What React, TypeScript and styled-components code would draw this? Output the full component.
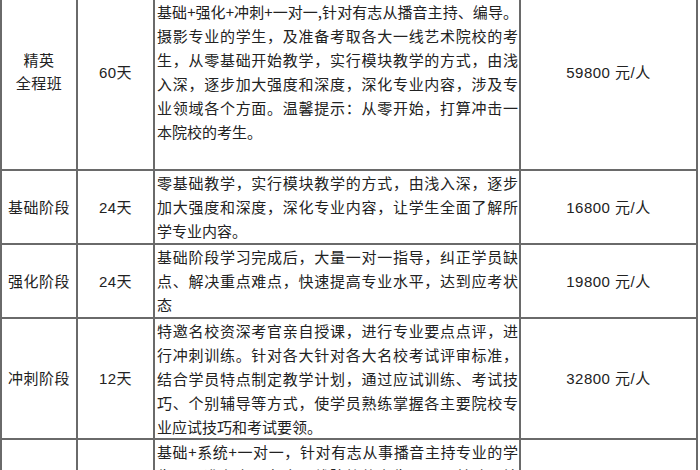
import React from 'react'
import styled, { createGlobalStyle } from 'styled-components'

interface Course {
  name: string[]
  days: string
  desc: string[]
  price: string
}

const courses: Course[] = [
  {
    name: ['精英', '全程班'],
    days: '60天',
    desc: [
      '基础+强化+冲刺+一对一,针对有志从播音主持、编导。',
      '摄影专业的学生，及准备考取各大一线艺术院校的考',
      '生，从零基础开始教学，实行模块教学的方式，由浅',
      '入深，逐步加大强度和深度，深化专业内容，涉及专',
      '业领域各个方面。温馨提示：从零开始，打算冲击一',
      '本院校的考生。',
    ],
    price: '59800 元/人',
  },
  {
    name: ['基础阶段'],
    days: '24天',
    desc: [
      '零基础教学，实行模块教学的方式，由浅入深，逐步',
      '加大强度和深度，深化专业内容，让学生全面了解所',
      '学专业内容。',
    ],
    price: '16800 元/人',
  },
  {
    name: ['强化阶段'],
    days: '24天',
    desc: [
      '基础阶段学习完成后，大量一对一指导，纠正学员缺',
      '点、解决重点难点，快速提高专业水平，达到应考状',
      '态',
    ],
    price: '19800 元/人',
  },
  {
    name: ['冲刺阶段'],
    days: '12天',
    desc: [
      '特邀名校资深考官亲自授课，进行专业要点点评，进',
      '行冲刺训练。针对各大针对各大名校考试评审标准，',
      '结合学员特点制定教学计划，通过应试训练、考试技',
      '巧、个别辅导等方式，使学员熟练掌握各主要院校专',
      '业应试技巧和考试要领。',
    ],
    price: '32800 元/人',
  },
  {
    name: [''],
    days: '',
    desc: [
      '基础+系统+一对一，针对有志从事播音主持专业的学',
      '生，及准备考取各大一线院校的考生，从零基础开始',
      '教学，实行模块教学的方式，由浅入深，逐步加大强',
      '度和深度，深化专业内容。',
    ],
    price: '',
  },
]

export default function App(): JSX.Element {
  return (
    <>
      <GlobalStyle />
      <Table>
        {courses.map((course, index) => (
          <React.Fragment key={`course-${index}`}>
            <Cell>
              <Stack>
                {course.name.map(part => (
                  <span key={part}>{part}</span>
                ))}
              </Stack>
            </Cell>
            <Cell>{course.days}</Cell>
            <DescCell>
              <Desc>
                {course.desc.map((line, i) => (
                  <Line key={`${index}-${i}`} $last={i === course.desc.length - 1}>
                    {line}
                  </Line>
                ))}
              </Desc>
            </DescCell>
            <Cell>{course.price}</Cell>
          </React.Fragment>
        ))}
      </Table>
    </>
  )
}

const GlobalStyle = createGlobalStyle`
  html, body {
    margin: 0;
    padding: 0;
    background: #fff;
    overflow: hidden;
  }
  body {
    font-family: "Liberation Sans", "Noto Sans CJK SC", sans-serif;
    color: #222;
  }
`

const Table = styled.div`
  display: grid;
  grid-template-columns: 74px 75px 364px 175px;
  grid-template-rows: 194px 72px 72px 119px 96px;
  gap: 2px;
  padding: 2px;
  margin-top: -27px;
  width: max-content;
  background: #6a6a6a;
`

const Cell = styled.div`
  display: flex;
  align-items: center;
  justify-content: center;
  background: #fff;
  font-size: 15px;
  letter-spacing: 0.5px;
  line-height: 23px;
  text-align: center;
`

const Stack = styled.div`
  display: flex;
  flex-direction: column;
  align-items: center;
`

const DescCell = styled(Cell)`
  justify-content: flex-start;
  padding: 0 1px 0 2px;
`

const Desc = styled.div`
  width: 100%;
  font-family: "Noto Sans CJK SC", sans-serif;
  font-size: 15px;
  letter-spacing: 0;
  line-height: 24px;
`

const Line = styled.span<{ $last?: boolean }>`
  display: block;
  text-align: justify;
  text-align-last: ${p => (p.$last ? 'left' : 'justify')};
`
